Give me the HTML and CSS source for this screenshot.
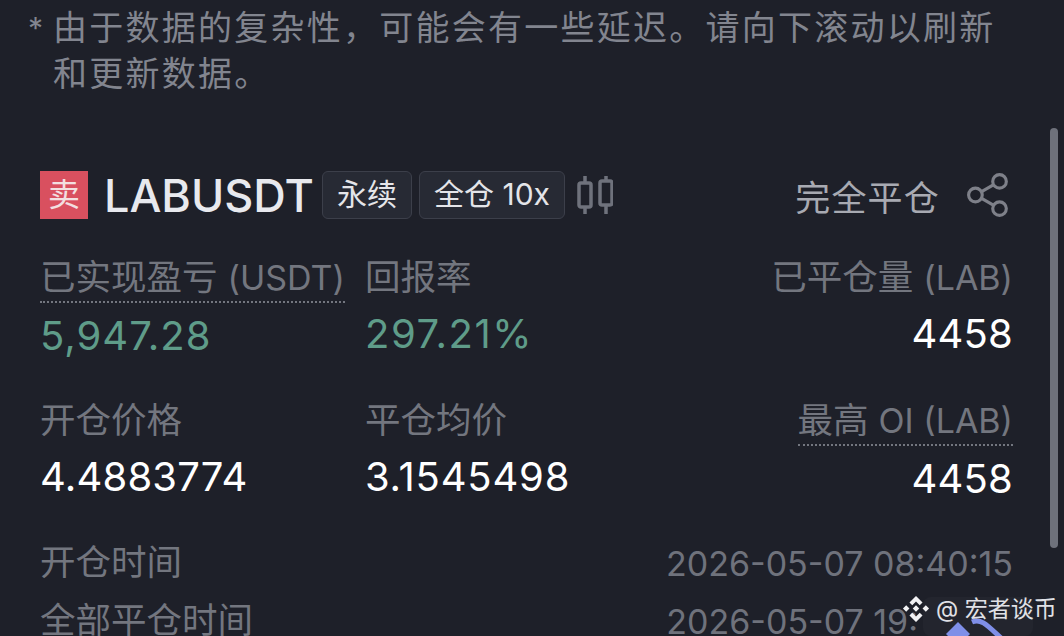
FILE: index.html
```html
<!DOCTYPE html>
<html lang="zh-CN">
<head>
    <meta charset="UTF-8">
    <title>LABUSDT</title>
    <link rel="stylesheet" href="styles.css">
</head>
<body>

    <!-- Notice -->
    <div class="notice">
        <span class="star">*</span>
        <p>由于数据的复杂性，可能会有一些延迟。请向下滚动以刷新和更新数据。</p>
    </div>

    <!-- Position card -->
    <div class="card">
        <div class="card-head">
            <span class="side">卖</span>
            <span class="symbol">LABUSDT</span>
            <span class="tag">永续</span>
            <span class="tag">全仓 10x</span>
            <svg class="candle" width="36" height="40" viewBox="0 0 36 40">
                <path d="M8 1V8M8 32V39M29 1V6M29 30V39"/>
                <rect x="2" y="8" width="12" height="24" rx="2"/>
                <rect x="23" y="6" width="12" height="24" rx="2"/>
            </svg>
            <span class="close-all">完全平仓</span>
            <svg class="share" width="44" height="44" viewBox="0 0 42 42">
                <circle cx="32" cy="8" r="6.5"/>
                <circle cx="9" cy="21" r="6.5"/>
                <circle cx="32" cy="34" r="6.5"/>
                <path d="M14.500 18L26.500 11M14.500 24L26.500 31"/>
            </svg>
        </div>

        <div class="stats">
            <div class="stat">
                <span class="label dotted">已实现盈亏 <span class="unit">(USDT)</span></span>
                <span class="value green">5,947.28</span>
            </div>
            <div class="stat">
                <span class="label">回报率</span>
                <span class="value green wide">297.21%</span>
            </div>
            <div class="stat right">
                <span class="label">已平仓量 <span class="unit">(LAB)</span></span>
                <span class="value">4458</span>
            </div>
            <div class="stat">
                <span class="label">开仓价格</span>
                <span class="value">4.4883774</span>
            </div>
            <div class="stat">
                <span class="label">平仓均价</span>
                <span class="value wide">3.1545498</span>
            </div>
            <div class="stat right">
                <span class="label dotted">最高 <span class="unit">OI (LAB)</span></span>
                <span class="value">4458</span>
            </div>
        </div>

        <div class="time-row">
            <span class="label">开仓时间</span>
            <span class="time">2026-05-07 08:40:15</span>
        </div>
        <div class="time-row">
            <span class="label">全部平仓时间</span>
            <span class="time cut">2026-05-07 19:</span>
        </div>
    </div>

    <div class="scrollbar"></div>

    <!-- Watermark -->
    <svg class="mark-bg" width="141" height="39" viewBox="0 0 141 39">
        <rect x="0" y="0" width="110" height="39" rx="8"/>
        <path class="diamond" d="M35 25L47 37L35 49L23 37Z"/>
        <path class="arc" d="M49 25C58 21 64 28 78 41"/>
    </svg>
    <div class="watermark">
        <svg width="28" height="28" viewBox="0 0 30 30">
            <path d="M15 1L22 8L19 11L15 7L11 11L8 8Z"/>
            <path d="M4.500 11L8 14.500L4.500 18L1 14.500Z"/>
            <path d="M25.500 11L29 14.500L25.500 18L22 14.500Z"/>
            <path d="M15 11L18.500 14.500L15 18L11.500 14.500Z"/>
            <path d="M15 29L8 22L11 19L15 23L19 19L22 22Z"/>
        </svg>
        <span>@ 宏者谈币</span>
    </div>

</body>
</html>
```

FILE: styles.css
```css
* {
    margin: 0;
    padding: 0;
    box-sizing: border-box;
    font-family: "Inter", "Noto Sans CJK SC", sans-serif;
}

body {
    width: 1064px;
    height: 636px;
    overflow: hidden;
    position: relative;
    background-color: #1e2029;
    color: #fff;
}

/* Notice */
.notice {
    display: flex;
    padding: 5px 60px 0 28px;
    color: #82858f;
    font-size: 34px;
    letter-spacing: 2.25px;
    line-height: 46px;
}

.star {
    width: 25px;
    flex-shrink: 0;
    letter-spacing: 0;
    font-size: 30px;
}

/* Card */
.card {
    padding: 0 51px 0 40px;
    margin-top: 72px;
}

.card-head {
    display: flex;
    align-items: center;
    height: 52px;
}

.side {
    width: 48px;
    height: 48px;
    background-color: #d9505f;
    color: #f3dfe0;
    font-size: 32px;
    line-height: 48px;
    text-align: center;
}

.symbol {
    margin-left: 16px;
    width: 218px;
    font-size: 45px;
    font-weight: 500;
    color: #e8e9ee;
    white-space: nowrap;
}

.tag {
    height: 48px;
    margin-right: 7px;
    padding: 0 14px;
    border: 1px solid #3c3f4a;
    border-radius: 6px;
    background-color: #272a34;
    color: #e4e5e9;
    font-size: 30px;
    line-height: 44px;
    white-space: nowrap;
}

.candle {
    margin-left: 5px;
    fill: none;
    stroke: #6f727c;
    stroke-width: 3.5;
}

.close-all {
    margin-left: auto;
    padding-top: 1px;
    color: #a8aab2;
    font-size: 35px;
    letter-spacing: 1.2px;
}

.share {
    margin-left: 26px;
    margin-right: 3px;
    fill: none;
    stroke: #7e8089;
    stroke-width: 3;
}

/* Stats */
.stats {
    display: grid;
    grid-template-columns: 325px 1fr auto;
    row-gap: 31px;
    margin-top: 34px;
}

.stat {
    display: flex;
    flex-direction: column;
    align-items: flex-start;
}

.stat.right {
    align-items: flex-end;
}

.label {
    color: #73767f;
    font-size: 35.5px;
    line-height: 46px;
    white-space: nowrap;
}

.unit {
    font-size: 34px;
}

.dotted {
    border-bottom: 2px dotted #73767f;
}

.value {
    padding-top: 2px;
    font-size: 40px;
    line-height: 62px;
    letter-spacing: 0.2px;
}

.value.wide {
    letter-spacing: 0.8px;
}

.green {
    color: #5f9c89;
    letter-spacing: 1px;
}

.green.wide {
    letter-spacing: 1.5px;
}

.time-row {
    display: flex;
    justify-content: space-between;
    align-items: center;
    height: 58px;
    margin-top: 24px;
}

.time-row + .time-row {
    margin-top: 0;
}

.time {
    color: #6f727c;
    font-size: 34px;
}

.time.cut {
    margin-right: 95px;
}

.scrollbar {
    position: absolute;
    left: 1050px;
    top: 128px;
    width: 8px;
    height: 420px;
    border-radius: 4px;
    background-color: #6e717b;
}

/* Watermark */
.mark-bg {
    position: absolute;
    left: 923px;
    top: 597px;
    fill: #23252e;
}

.mark-bg .diamond {
    fill: #7f8fe8;
}

.mark-bg .arc {
    fill: none;
    stroke: #7f8fe8;
    stroke-width: 5;
}

.watermark {
    position: absolute;
    left: 902px;
    top: 595px;
    display: flex;
    align-items: center;
    gap: 6px;
    color: #e0e1e6;
    font-size: 23px;
    line-height: 28px;
    white-space: nowrap;
}

.watermark svg {
    fill: #f2f2f4;
}
```
